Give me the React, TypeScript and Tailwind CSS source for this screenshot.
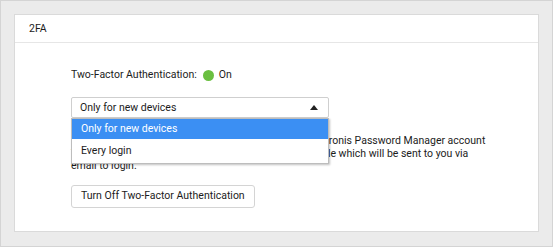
import React from 'react';

export default function App() {
  return (
    <div
      className="w-[553px] h-[247px] bg-[#ebebeb] border border-[#d4d4d4] pt-[13px] pl-[13px] pr-[13px] text-[#1c1c1c] text-[10.5px]"
      style={{ fontFamily: 'Roboto, "Liberation Sans", sans-serif' }}
    >
      <div className="bg-white border border-[#dadada] h-[218px]">
        {/* Header */}
        <div className="h-[28px] flex items-center pl-[14px] border-b border-[#e6e6e6]">
          2FA
        </div>

        {/* Body */}
        <div className="pl-[56px] pt-[24px]">
          <div className="flex items-center h-[16px]">
            <span>Two-Factor Authentication:</span>
            <span className="ml-[6px] w-[11px] h-[11px] rounded-full bg-[#6abf40]" />
            <span className="ml-[5px]">On</span>
          </div>

          <div className="relative mt-[14px] w-[258px]">
            <div className="h-[21px] border border-[#cfcfcf] rounded-[2px] flex items-center justify-between pl-[8px] pr-[10px] bg-white">
              <span>Only for new devices</span>
              <svg width="8" height="5" viewBox="0 0 8 5">
                <path d="M0 5 L4 0 L8 5 Z" fill="#222" />
              </svg>
            </div>
            {/* Open list */}
            <div className="absolute left-0 top-[21px] w-[258px] bg-white border border-[#bdbdbd] shadow-[1px_1px_2px_rgba(0,0,0,0.25)] z-10">
              <div className="h-[20px] flex items-center pl-[9px] bg-[#3b8ff3] text-white">
                Only for new devices
              </div>
              <div className="h-[24px] flex items-center pl-[9px]">Every login</div>
            </div>
          </div>

          <p className="mt-[17px] leading-[12.5px] whitespace-nowrap">
            For additional security, every time you sign in to your Acronis Password Manager account
            <br />
            You will be asked to enter your one-time verification code which will be sent to you via
            <br />
            email to login.
          </p>

          <button className="block mt-[12px] h-[23px] px-[9px] border border-[#d4d4d4] rounded-[3px] bg-white text-[10.5px] text-[#1c1c1c]">
            Turn Off Two-Factor Authentication
          </button>
        </div>
      </div>
    </div>
  );
}
